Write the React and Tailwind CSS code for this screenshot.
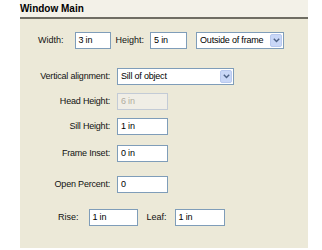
const Field = ({ value, w = "w-[51px]", disabled = false }) => (
  <div
    className={`flex h-[17px] ${w} items-center border pl-[3px] text-[9px] tracking-[-0.2px] ${
      disabled ? "border-[#c3cbd6] bg-[#f0eee6] text-[#b0ad9f]" : "border-[#7f9db9] bg-white text-black"
    }`}
  >
    {value}
  </div>
);

const Select = ({ value, w }) => (
  <div className={`flex h-[17px] ${w} items-center justify-between border border-[#7f9db9] bg-white pl-[3px] pr-px text-[9px] tracking-[-0.2px] text-black`}>
    <span>{value}</span>
    <div className="flex h-[13px] w-[12px] items-center justify-center rounded-[2px] border border-[#b9c9ef] bg-[#c9d7f7]">
      <svg width="7" height="5" viewBox="0 0 7 5">
        <path d="M0.8 0.8 L3.5 3.6 L6.2 0.8" fill="none" stroke="#4d6185" strokeWidth="1.4" />
      </svg>
    </div>
  </div>
);

const Row = ({ label, children, className = "" }) => (
  <div className={`flex items-center ${className}`}>
    <div className="w-[92px] pr-[2px] text-right text-[9px] tracking-[-0.2px] text-[#111]">{label}</div>
    <div className="ml-[5px]">{children}</div>
  </div>
);

export default function App() {
  return (
    <div className="h-[250px] w-[322px] bg-white" style={{ fontFamily: '"Liberation Sans", Arial, sans-serif' }}>
      <div className="ml-[20px] flex h-[248px] w-[288px] flex-col bg-[#ece9d8]">
        <div className="flex h-[17px] items-center bg-[#f3f1e8] text-[10px] font-bold text-black">Window Main</div>
        <div className="h-[2px] bg-[#6f6d63]" />

        <div className="mt-[13px] flex items-center pl-[18px] text-[9px] text-[#111]">
          <span>Width:</span>
          <div className="ml-[11px]">
            <Field value="3 in" w="w-[36px]" />
          </div>
          <span className="ml-[5px]">Height:</span>
          <div className="ml-[6px]">
            <Field value="5 in" w="w-[37px]" />
          </div>
          <div className="ml-[9px]">
            <Select value="Outside of frame" w="w-[88px]" />
          </div>
        </div>

        <Row label="Vertical alignment:" className="mt-[19px]">
          <Select value="Sill of object" w="w-[117px]" />
        </Row>
        <Row label="Head Height:" className="mt-[8px]">
          <Field value="6 in" disabled />
        </Row>
        <Row label="Sill Height:" className="mt-[8px]">
          <Field value="1 in" />
        </Row>
        <Row label="Frame Inset:" className="mt-[10px]">
          <Field value="0 in" />
        </Row>
        <Row label="Open Percent:" className="mt-[14px]">
          <Field value="0" />
        </Row>

        <div className="mt-[16px] flex items-center pl-[38px] text-[9px] text-[#111]">
          <span>Rise:</span>
          <div className="ml-[10px]">
            <Field value="1 in" w="w-[49px]" />
          </div>
          <span className="ml-[9px]">Leaf:</span>
          <div className="ml-[8px]">
            <Field value="1 in" w="w-[50px]" />
          </div>
        </div>
      </div>
    </div>
  );
}
